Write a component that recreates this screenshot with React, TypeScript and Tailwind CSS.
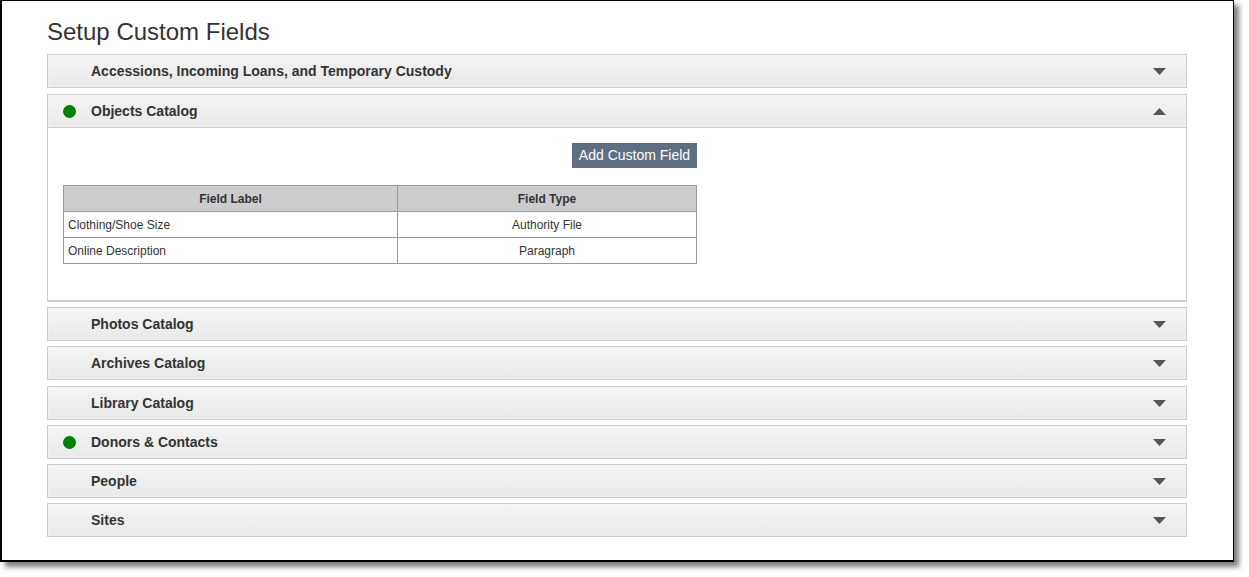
import React from "react";

const font = { fontFamily: '"Liberation Sans", Arial, sans-serif' };

function Arrow({ up }: { up?: boolean }) {
  return (
    <svg width="13" height="7" viewBox="0 0 13 7" className="block">
      {up ? (
        <polygon points="0,7 13,7 6.5,0" fill="#555555" />
      ) : (
        <polygon points="0,0 13,0 6.5,7" fill="#555555" />
      )}
    </svg>
  );
}

function Header({ title, dot, open }: { title: string; dot?: boolean; open?: boolean }) {
  return (
    <div className="relative flex h-[34px] items-center border border-[#cccccc] bg-gradient-to-b from-[#f4f4f4] to-[#e9e9e9] shadow-[inset_0_0_2px_rgba(255,255,255,0.9)]">
      <div className="flex w-[43px] shrink-0 items-center pl-[15px]">
        {dot && <span className="block h-[13px] w-[13px] rounded-full bg-[#008000]" />}
      </div>
      <span className="flex-1 text-[14px] font-bold text-[#333333]">{title}</span>
      <div className="pr-[20px]">
        <Arrow up={open} />
      </div>
    </div>
  );
}

export default function App() {
  const rows = [
    ["Clothing/Shoe Size", "Authority File"],
    ["Online Description", "Paragraph"],
  ];
  return (
    <div className="h-[577px] w-[1249px] bg-white" style={font}>
      <div className="h-[562px] w-[1234px] border-b-2 border-l-2 border-r border-t border-black bg-white shadow-[5px_5px_5px_rgba(0,0,0,0.5)]">
        <div className="pl-[45px] pr-[46px]">
          <h1 className="pt-[16px] text-[24px] leading-[30px] text-[#333333]">Setup Custom Fields</h1>
          <div className="mt-[7px] flex flex-col">
            <div className="mb-[6px]">
              <Header title="Accessions, Incoming Loans, and Temporary Custody" />
            </div>
            <div className="mb-[5px]">
              <Header title="Objects Catalog" dot open />
              <div className="border-x border-b-2 border-[#cccccc] bg-white px-[15px] pb-[36px] pt-[15px]">
                <div className="w-[634px]">
                  <div className="flex justify-end">
                    <button className="h-[25px] w-[125px] bg-[#5e6f82] text-[14px] text-white">Add Custom Field</button>
                  </div>
                  <table className="mt-[17px] w-[634px] border-collapse text-[12px] text-[#333333]">
                    <thead>
                      <tr className="h-[26px] bg-[#cccccc]">
                        <th className="w-[334px] border border-[#999999] font-bold">Field Label</th>
                        <th className="border border-[#999999] font-bold">Field Type</th>
                      </tr>
                    </thead>
                    <tbody>
                      {rows.map((r) => (
                        <tr key={r[0]} className="h-[26px]">
                          <td className="border border-[#999999] pl-[4px] text-left">{r[0]}</td>
                          <td className="border border-[#999999] text-center">{r[1]}</td>
                        </tr>
                      ))}
                    </tbody>
                  </table>
                </div>
              </div>
            </div>
            <div className="mb-[5px]">
              <Header title="Photos Catalog" />
            </div>
            <div className="mb-[6px]">
              <Header title="Archives Catalog" />
            </div>
            <div className="mb-[5px]">
              <Header title="Library Catalog" />
            </div>
            <div className="mb-[5px]">
              <Header title="Donors & Contacts" dot />
            </div>
            <div className="mb-[5px]">
              <Header title="People" />
            </div>
            <div className="mb-[5px]">
              <Header title="Sites" />
            </div>
          </div>
        </div>
      </div>
    </div>
  );
}
